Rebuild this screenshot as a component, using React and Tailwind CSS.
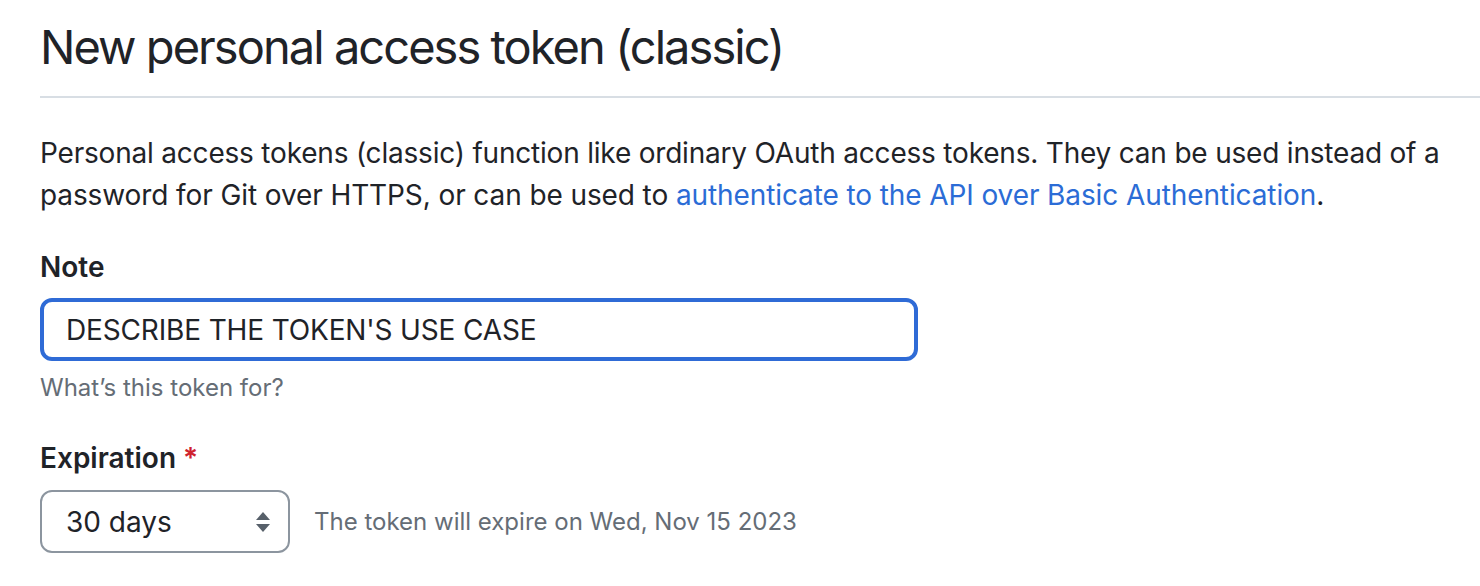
export default function App() {
  return (
    <div className="min-h-[586px] bg-white pl-10 text-[#1f2328]" style={{ fontFamily: 'Inter, "Noto Sans", sans-serif' }}>
      <div className="border-b-2 border-[#d8dee4] pb-[13px] pt-[11px]">
        <h1 className="text-[47px] font-normal leading-[72px] tracking-[-1.95px]">New personal access token (classic)</h1>
      </div>

      <p className="mt-[34px] text-[28px] leading-[42px] tracking-[-0.1px]">
        <span className="tracking-[-0.2px]">
          Personal access tokens (classic) function like ordinary OAuth access tokens. They can be used instead of a
        </span>
        <br />
        password for Git over HTTPS, or can be used to{' '}
        <a href="#" className="text-[#2b6cd6]">authenticate to the API over Basic Authentication</a>.
      </p>

      <div className="mt-[30px]">
        <label className="block text-[28px] font-semibold leading-[42px]">Note</label>
        <input
          readOnly
          value="DESCRIBE THE TOKEN'S USE CASE"
          className="mt-[10px] block h-[63px] w-[878px] rounded-[12px] border-4 border-[#2f6bd6] px-[22px] text-[28px] tracking-[-0.15px] text-[#1f2328] outline-none"
        />
        <p className="mt-[9px] text-[24px] leading-[36px] text-[#656d76]">What’s this token for?</p>
      </div>

      <div className="mt-[31px]">
        <label className="block text-[28px] font-semibold leading-[42px]">
          Expiration <span className="text-[#cf222e]">*</span>
        </label>
        <div className="mt-[11px] flex items-center gap-6">
          <div className="relative flex h-[63px] w-[250px] items-center rounded-[12px] border-2 border-[#8c959f] pl-6 text-[28px]">
            30 days
            <svg className="absolute right-[17px] top-1/2 -translate-y-1/2" width="16" height="22" viewBox="0 0 16 22" fill="#57606a">
              <path d="M8 1 L15 9 L1 9 Z" />
              <path d="M1 13 L15 13 L8 21 Z" />
            </svg>
          </div>
          <span className="text-[24px] text-[#656d76]">The token will expire on Wed, Nov 15 2023</span>
        </div>
      </div>
    </div>
  );
}
